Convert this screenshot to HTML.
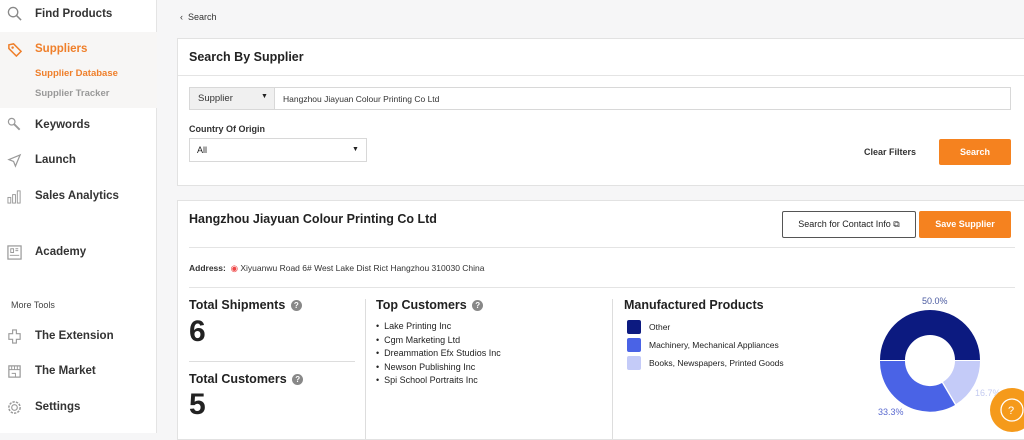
<!DOCTYPE html>
<html><head><meta charset="utf-8"><style>
*{box-sizing:border-box;margin:0;padding:0}
body{width:1024px;height:433px;overflow:hidden;font-family:"Liberation Sans",sans-serif;background:#f6f6f7;position:relative;color:#222}
.sb{position:absolute;left:0;top:0;width:157px;height:433px;background:#fff;border-right:1px solid #e4e4e4}
.it{position:absolute;left:35px;font-weight:bold;font-size:11.5px;color:#333}
.ic{position:absolute;left:7px;width:15px;height:15px}
.card{position:absolute;background:#fff;border:1px solid #e2e2e2}
.t{position:absolute;white-space:nowrap}
.q{display:inline-block;width:11px;height:11px;border-radius:50%;background:#888;color:#fff;font-size:8px;line-height:11px;text-align:center;vertical-align:1px;margin-left:2px}
</style></head><body>
<div class="sb">
 <div style="position:absolute;left:0;top:32px;width:157px;height:76px;background:#f7f6f5"></div>
 <svg class="ic" style="top:6px" viewBox="0 0 16 16"><circle cx="6.5" cy="6.5" r="5" fill="none" stroke="#888" stroke-width="1.4"/><path d="M10 10l5 5" stroke="#888" stroke-width="1.6"/></svg>
 <div class="it" style="top:8px">Find Products</div>
 <svg class="ic" style="top:42px" viewBox="0 0 16 16"><path d="M2 3l5-1 8 8-5 5-8-8z" fill="none" stroke="#ef7f2a" stroke-width="1.6"/><circle cx="6" cy="6" r="1.3" fill="#ef7f2a"/></svg>
 <div class="it" style="top:43px;color:#ef7f2a">Suppliers</div>
 <div class="t" style="left:35px;top:68px;font-size:9.5px;font-weight:bold;color:#ef7f2a">Supplier Database</div>
 <div class="t" style="left:35px;top:88px;font-size:9.5px;font-weight:bold;color:#999">Supplier Tracker</div>
 <svg class="ic" style="top:117px" viewBox="0 0 16 16"><circle cx="5" cy="5" r="3.5" fill="none" stroke="#999" stroke-width="1.3"/><path d="M7.5 7.5l6 6" stroke="#999" stroke-width="2"/></svg>
 <div class="it" style="top:119px">Keywords</div>
 <svg class="ic" style="top:153px" viewBox="0 0 16 16"><path d="M14 2L2 7l5 2 2 5z" fill="none" stroke="#999" stroke-width="1.3"/></svg>
 <div class="it" style="top:154px">Launch</div>
 <svg class="ic" style="top:189px" viewBox="0 0 16 16"><rect x="1" y="9" width="3" height="6" fill="none" stroke="#999"/><rect x="6" y="6" width="3" height="9" fill="none" stroke="#999"/><rect x="11" y="2" width="3" height="13" fill="none" stroke="#999"/></svg>
 <div class="it" style="top:190px">Sales Analytics</div>
 <svg class="ic" style="top:245px" viewBox="0 0 16 16"><rect x="1" y="1" width="14" height="14" fill="none" stroke="#999" stroke-width="1.3"/><path d="M4 4h3v4H4zM9 4h3M9 6h3M3 11h10" stroke="#999" fill="none"/></svg>
 <div class="it" style="top:246px">Academy</div>
 <div class="t" style="left:11px;top:300px;font-size:9px;color:#444">More Tools</div>
 <svg class="ic" style="top:329px" viewBox="0 0 16 16"><path d="M6 1h4v4h4v6h-4v4H6v-4H2V5h4z" fill="none" stroke="#999" stroke-width="1.2"/></svg>
 <div class="it" style="top:330px">The Extension</div>
 <svg class="ic" style="top:364px" viewBox="0 0 16 16"><rect x="2" y="2" width="12" height="12" fill="none" stroke="#999" stroke-width="1.3"/><path d="M2 6h12M5 2v4M8 2v4M11 2v4M5 10h4v4" stroke="#999" fill="none"/></svg>
 <div class="it" style="top:365px">The Market</div>
 <svg class="ic" style="top:400px" viewBox="0 0 16 16"><circle cx="8" cy="8" r="6" fill="none" stroke="#999" stroke-width="1.6" stroke-dasharray="2.5 1.2"/><circle cx="8" cy="8" r="3" fill="none" stroke="#999" stroke-width="1.2"/></svg>
 <div class="it" style="top:401px">Settings</div>
</div>
<div class="t" style="left:180px;top:12px;font-size:9px;color:#333">‹&nbsp; Search</div>
<div class="card" style="left:177px;top:38px;width:852px;height:148px">
 <div class="t" style="left:11px;top:11px;font-size:12.5px;font-weight:bold">Search By Supplier</div>
 <div style="position:absolute;left:0;top:36px;width:100%;border-top:1px solid #e4e4e4"></div>
 <div style="position:absolute;left:11px;top:48px;width:822px;height:23px;border:1px solid #d8d8d8"></div>
 <div style="position:absolute;left:11px;top:48px;width:86px;height:23px;background:#f0f0f0;border:1px solid #d8d8d8"></div>
 <div class="t" style="left:20px;top:54px;font-size:9.5px;color:#333">Supplier</div>
 <div class="t" style="left:83px;top:54px;font-size:7px">▼</div>
 <div class="t" style="left:105px;top:55px;font-size:8.5px;color:#333">Hangzhou Jiayuan Colour Printing Co Ltd</div>
 <div class="t" style="left:11px;top:85px;font-size:9px;font-weight:bold;color:#333">Country Of Origin</div>
 <div style="position:absolute;left:11px;top:99px;width:178px;height:24px;border:1px solid #d8d8d8"></div>
 <div class="t" style="left:19px;top:106px;font-size:9px">All</div>
 <div class="t" style="left:174px;top:107px;font-size:7px">▼</div>
 <div class="t" style="left:686px;top:108px;font-size:9px;font-weight:bold;color:#333">Clear Filters</div>
 <div style="position:absolute;left:761px;top:100px;width:72px;height:26px;background:#f5821f;border-radius:2px;color:#fff;font-size:9px;font-weight:bold;text-align:center;line-height:26px">Search</div>
</div>
<div class="card" style="left:177px;top:200px;width:852px;height:240px">
 <div class="t" style="left:11px;top:11px;font-size:12.5px;font-weight:bold">Hangzhou Jiayuan Colour Printing Co Ltd</div>
 <div style="position:absolute;left:604px;top:10px;width:134px;height:27px;border:1px solid #555;border-radius:2px;font-size:9px;text-align:center;line-height:25px">Search for Contact Info ⧉</div>
 <div style="position:absolute;left:741px;top:10px;width:92px;height:27px;background:#f5821f;border-radius:2px;color:#fff;font-size:9px;font-weight:bold;text-align:center;line-height:27px">Save Supplier</div>
 <div style="position:absolute;left:11px;top:46px;width:826px;border-top:1px solid #e4e4e4"></div>
 <div class="t" style="left:11px;top:62px;font-size:8.5px;color:#333"><b>Address:</b> &nbsp;<span style="color:#e44">◉</span> Xiyuanwu Road 6# West Lake Dist Rict Hangzhou 310030 China</div>
 <div style="position:absolute;left:11px;top:86px;width:826px;border-top:1px solid #e4e4e4"></div>
 <div class="t" style="left:11px;top:97px;font-size:12.5px;font-weight:bold">Total Shipments <span class="q">?</span></div>
 <div class="t" style="left:11px;top:114px;font-size:30px;font-weight:bold">6</div>
 <div style="position:absolute;left:11px;top:160px;width:166px;border-top:1px solid #ddd"></div>
 <div class="t" style="left:11px;top:171px;font-size:12.5px;font-weight:bold">Total Customers <span class="q">?</span></div>
 <div class="t" style="left:11px;top:187px;font-size:30px;font-weight:bold">5</div>
 <div style="position:absolute;left:187px;top:98px;height:140px;border-left:1px solid #ddd"></div>
 <div class="t" style="left:198px;top:97px;font-size:12.5px;font-weight:bold">Top Customers <span class="q">?</span></div>
 <div class="t" style="left:198px;top:119px;font-size:9px;line-height:13.5px">•&nbsp; Lake Printing Inc<br>•&nbsp; Cgm Marketing Ltd<br>•&nbsp; Dreammation Efx Studios Inc<br>•&nbsp; Newson Publishing Inc<br>•&nbsp; Spi School Portraits Inc</div>
 <div style="position:absolute;left:434px;top:98px;height:140px;border-left:1px solid #ddd"></div>
 <div class="t" style="left:446px;top:97px;font-size:12.5px;font-weight:bold">Manufactured Products</div>
 <div style="position:absolute;left:449px;top:119px;width:14px;height:14px;background:#0c1a80;border-radius:2px"></div>
 <div class="t" style="left:471px;top:121px;font-size:8.5px">Other</div>
 <div style="position:absolute;left:449px;top:137px;width:14px;height:14px;background:#4a63e6;border-radius:2px"></div>
 <div class="t" style="left:471px;top:139px;font-size:8.5px">Machinery, Mechanical Appliances</div>
 <div style="position:absolute;left:449px;top:155px;width:14px;height:14px;background:#c4cbf8;border-radius:2px"></div>
 <div class="t" style="left:471px;top:157px;font-size:8.5px">Books, Newspapers, Printed Goods</div>
</div>
<svg style="position:absolute;left:870px;top:290px" width="154" height="143" viewBox="870 290 154 143">
 <path d="M880 360A50 50 0 0 1 980 360L955 360A25 25 0 0 0 905 360Z" fill="#0c1a80"/>
 <path d="M980 361A50 50 0 0 1 956 404L943 382A25 25 0 0 0 955 361Z" fill="#c4cbf8"/>
 <path d="M955 405A50 50 0 0 1 880 361L905 361A25 25 0 0 0 942 383Z" fill="#4a63e6"/>
 <text x="922" y="304" font-size="9" fill="#4a5aa0" font-family="Liberation Sans">50.0%</text>
 <text x="878" y="415" font-size="9" fill="#5a6ad0" font-family="Liberation Sans">33.3%</text>
 <text x="975" y="396" font-size="9" fill="#c4cbf0" font-family="Liberation Sans">16.7%</text>
 <circle cx="1012" cy="410" r="22" fill="#f59a1b"/>
 <circle cx="1012" cy="410" r="11" fill="none" stroke="#fff" stroke-width="1.3"/>
 <text x="1008" y="414" font-size="11" fill="#fff" font-family="Liberation Sans">?</text>
</svg>
</body></html>
